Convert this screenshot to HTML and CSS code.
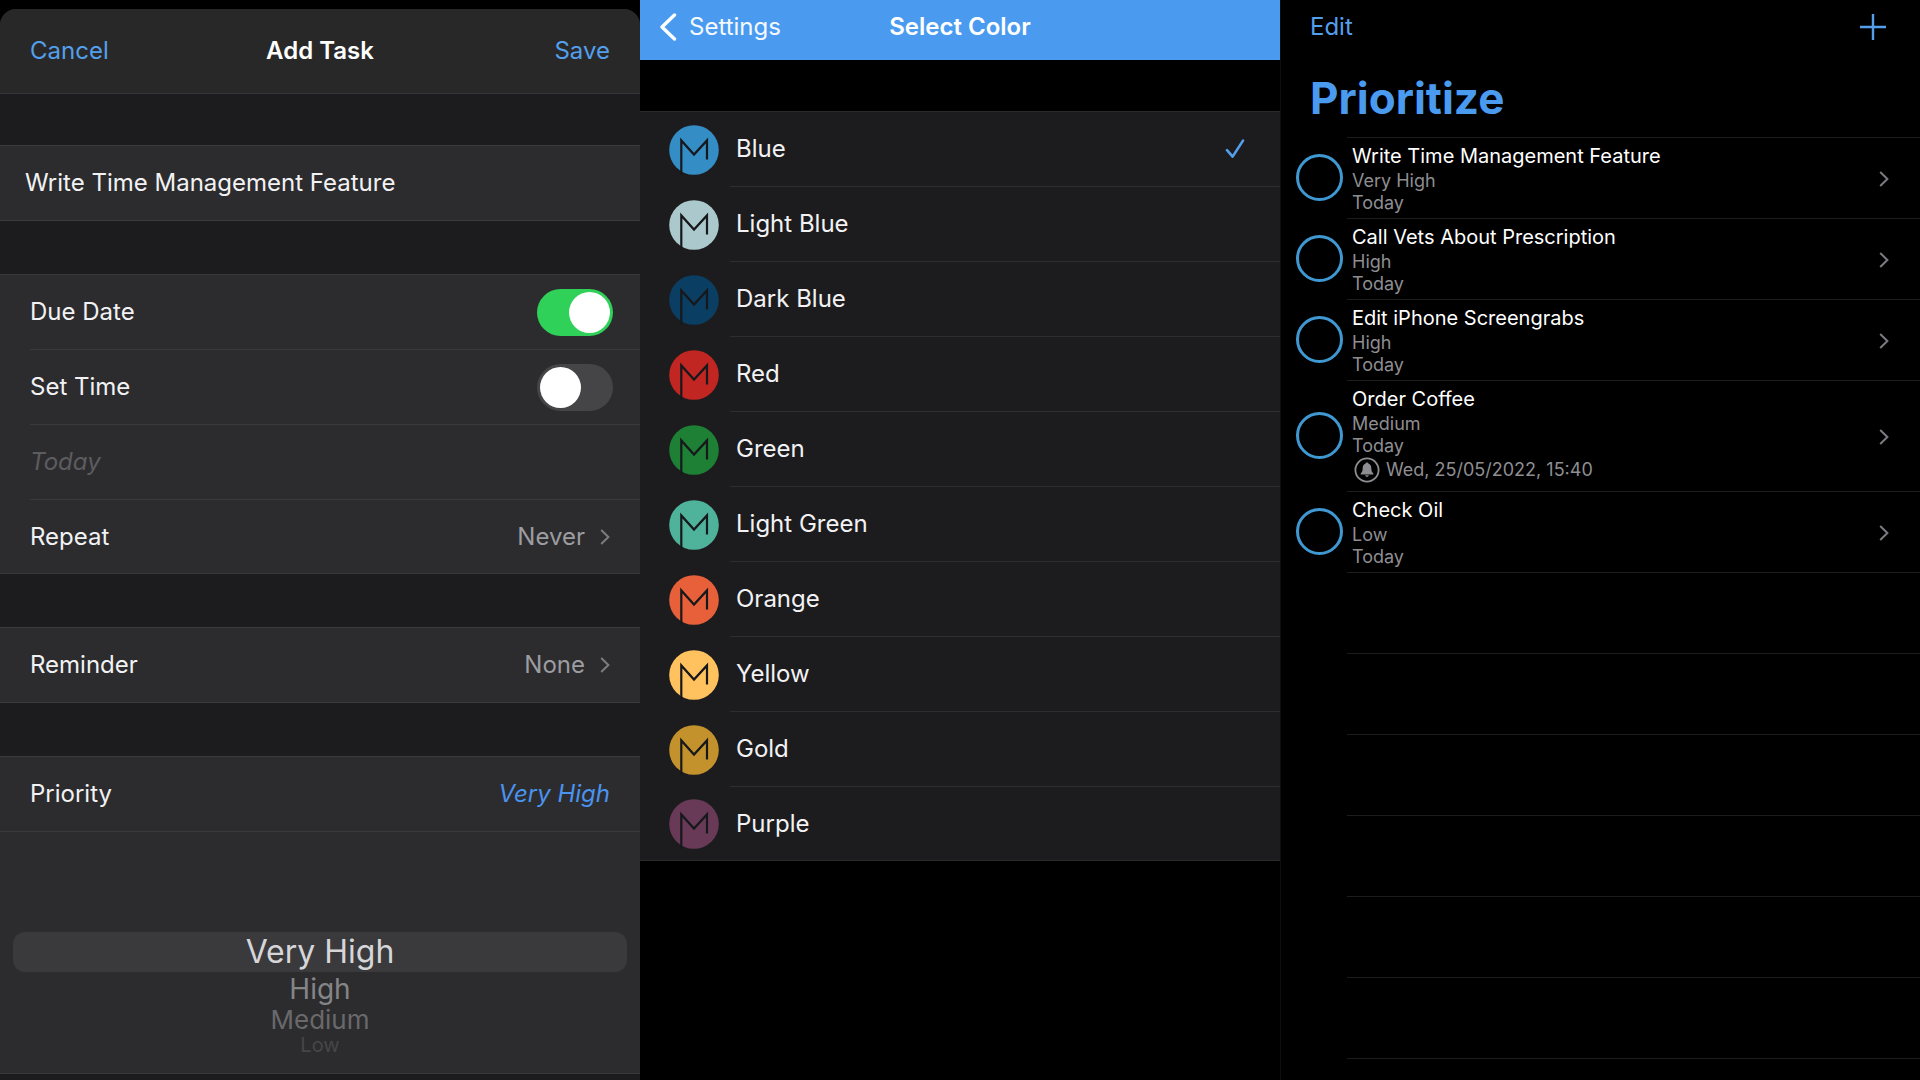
FILE: index.html
```
<!DOCTYPE html>
<html lang="en">
<head>
<meta charset="utf-8">
<meta name="viewport" content="width=device-width, initial-scale=1">
<title>Prioritize</title>
<link rel="stylesheet" href="styles.css">
</head>
<body>
<svg class="defs" width="0" height="0" aria-hidden="true">
  <symbol id="m-logo" viewBox="0 0 50 50"><circle cx="25" cy="25" r="24.8" fill="currentColor"/><path d="M12.3 50V15.4L25 29.6 38 15.4V34.6" fill="none" stroke="#16181b" stroke-width="2.2"/></symbol>
  <symbol id="chevron" viewBox="0 0 10 16"><path d="M1.2 1 8.4 8 1.2 15" fill="none" stroke="currentColor" stroke-width="2"/></symbol>
  <symbol id="check" viewBox="0 0 20 20"><path d="M2 11.2 7.6 17.6 18 1.6" fill="none" stroke="currentColor" stroke-width="2.6" stroke-linecap="round" stroke-linejoin="round"/></symbol>
</svg>
<main class="screens">

  <section class="screen add-task">
    <form class="sheet">
      <header class="sheet-bar">
        <button type="button" class="bar-button">Cancel</button>
        <h2 class="bar-title">Add Task</h2>
        <button type="button" class="bar-button bar-end">Save</button>
      </header>
      <div class="group group-first">
        <div class="row row-name"><input class="field" type="text" aria-label="Task name" value="Write Time Management Feature"></div>
      </div>
      <div class="group">
        <div class="row"><label for="due">Due Date</label><input class="switch" id="due" type="checkbox" checked></div>
        <div class="row"><label for="time">Set Time</label><input class="switch" id="time" type="checkbox"></div>
        <div class="row"><input class="field field-date" type="text" aria-label="Date" placeholder="Today"></div>
        <div class="row"><span>Repeat</span><button type="button" class="value">Never<svg class="chevron"><use href="#chevron"/></svg></button></div>
      </div>
      <div class="group">
        <div class="row"><span>Reminder</span><button type="button" class="value">None<svg class="chevron"><use href="#chevron"/></svg></button></div>
      </div>
      <div class="group group-priority">
        <div class="row row-full"><span>Priority</span><output class="priority">Very High</output></div>
        <div class="picker" role="radiogroup" aria-label="Priority">
          <label class="option option-selected"><input type="radio" name="priority" checked>Very High</label>
          <label class="option option-1"><input type="radio" name="priority">High</label>
          <label class="option option-2"><input type="radio" name="priority">Medium</label>
          <label class="option option-3"><input type="radio" name="priority">Low</label>
        </div>
      </div>
    </form>
  </section>

  <section class="screen select-color">
    <header class="color-bar">
      <a class="back" href="#settings"><svg class="back-icon" viewBox="0 0 18 28"><path d="M15.5 2 3 14 15.5 26" fill="none" stroke="currentColor" stroke-width="3.4" stroke-linecap="round" stroke-linejoin="round"/></svg>Settings</a>
      <h2 class="bar-title">Select Color</h2>
    </header>
    <div class="colors" role="radiogroup" aria-label="Color">
      <label class="color"><input type="radio" name="color" checked><svg class="logo blue"><use href="#m-logo"/></svg><span class="color-name">Blue<svg class="check"><use href="#check"/></svg></span></label>
      <label class="color"><input type="radio" name="color"><svg class="logo light-blue"><use href="#m-logo"/></svg><span class="color-name">Light Blue</span></label>
      <label class="color"><input type="radio" name="color"><svg class="logo dark-blue"><use href="#m-logo"/></svg><span class="color-name">Dark Blue</span></label>
      <label class="color"><input type="radio" name="color"><svg class="logo red"><use href="#m-logo"/></svg><span class="color-name">Red</span></label>
      <label class="color"><input type="radio" name="color"><svg class="logo green"><use href="#m-logo"/></svg><span class="color-name">Green</span></label>
      <label class="color"><input type="radio" name="color"><svg class="logo light-green"><use href="#m-logo"/></svg><span class="color-name">Light Green</span></label>
      <label class="color"><input type="radio" name="color"><svg class="logo orange"><use href="#m-logo"/></svg><span class="color-name">Orange</span></label>
      <label class="color"><input type="radio" name="color"><svg class="logo yellow"><use href="#m-logo"/></svg><span class="color-name">Yellow</span></label>
      <label class="color"><input type="radio" name="color"><svg class="logo gold"><use href="#m-logo"/></svg><span class="color-name">Gold</span></label>
      <label class="color"><input type="radio" name="color"><svg class="logo purple"><use href="#m-logo"/></svg><span class="color-name">Purple</span></label>
    </div>
  </section>

  <section class="screen tasks">
    <header class="tasks-bar">
      <button type="button" class="bar-button">Edit</button>
      <button type="button" class="bar-button add" aria-label="Add task"><svg class="plus" viewBox="0 0 26 26"><path d="M13 0V26M0 13H26" stroke="currentColor" stroke-width="2.4"/></svg></button>
    </header>
    <h1 class="tasks-title">Prioritize</h1>
    <ul class="task-list">
      <li class="task"><input class="done" type="checkbox" aria-label="Write Time Management Feature done"><a class="task-body" href="#task-1"><span class="task-text"><span class="task-name">Write Time Management Feature</span><span class="meta">Very High</span><span class="meta">Today</span></span><svg class="chevron"><use href="#chevron"/></svg></a></li>
      <li class="task"><input class="done" type="checkbox" aria-label="Call Vets About Prescription done"><a class="task-body" href="#task-2"><span class="task-text"><span class="task-name">Call Vets About Prescription</span><span class="meta">High</span><span class="meta">Today</span></span><svg class="chevron"><use href="#chevron"/></svg></a></li>
      <li class="task"><input class="done" type="checkbox" aria-label="Edit iPhone Screengrabs done"><a class="task-body" href="#task-3"><span class="task-text"><span class="task-name">Edit iPhone Screengrabs</span><span class="meta">High</span><span class="meta">Today</span></span><svg class="chevron"><use href="#chevron"/></svg></a></li>
      <li class="task"><input class="done" type="checkbox" aria-label="Order Coffee done"><a class="task-body" href="#task-4"><span class="task-text"><span class="task-name">Order Coffee</span><span class="meta">Medium</span><span class="meta">Today</span><span class="meta alarm"><svg class="bell" viewBox="0 0 26 26"><circle cx="13" cy="13" r="11.6" fill="none" stroke="currentColor" stroke-width="1.8"/><path d="M13 5.4c.9 0 1.3.5 1.4 1.1 2 .7 2.9 2.4 2.9 4.5 0 3.2.8 4.3 2 5.5v.9H6.7v-.9c1.2-1.2 2-2.3 2-5.5 0-2.1.9-3.8 2.9-4.5.1-.6.5-1.1 1.4-1.1zM11.2 18.3h3.6c-.2 1-.9 1.5-1.8 1.5s-1.6-.5-1.8-1.5z" fill="currentColor"/></svg>Wed, 25/05/2022, 15:40</span></span><svg class="chevron"><use href="#chevron"/></svg></a></li>
      <li class="task"><input class="done" type="checkbox" aria-label="Check Oil done"><a class="task-body" href="#task-5"><span class="task-text"><span class="task-name">Check Oil</span><span class="meta">Low</span><span class="meta">Today</span></span><svg class="chevron"><use href="#chevron"/></svg></a></li>
      <li class="blank"></li><li class="blank"></li><li class="blank"></li><li class="blank"></li><li class="blank"></li><li class="blank"></li><li class="blank"></li>
    </ul>
  </section>

</main>
</body>
</html>
```
FILE: styles.css
```
* { box-sizing: border-box; }

body {
  margin: 0;
  background: #000;
  color: #f2f2f4;
  font: 24px/32px Inter, "Liberation Sans", sans-serif;
}

button, input {
  margin: 0;
  padding: 0;
  border: 0;
  background: none;
  color: inherit;
  font: inherit;
}

h1, h2, ul { margin: 0; padding: 0; }
a { color: inherit; text-decoration: none; }
svg { display: block; flex: none; }
.defs { position: absolute; }

.screens {
  display: grid;
  grid-template-columns: repeat(3, minmax(0, 1fr));
  min-height: 100vh;
}

.bar-button { color: #549fec; }
.bar-title { font-size: 24px; font-weight: 600; color: #fff; text-align: center; }
.bar-end { justify-self: end; }
.chevron { width: 10px; height: 16px; color: #7c7c80; }

/* Add task */
.add-task { display: flex; padding-top: 9px; }

.sheet {
  flex: 1;
  min-width: 0;
  background: #1c1c1e;
  border-radius: 16px 16px 0 0;
  overflow: hidden;
}

.sheet-bar {
  display: grid;
  grid-template-columns: 1fr auto 1fr;
  align-items: center;
  justify-items: start;
  height: 85px;
  padding: 0 30px;
  background: #282828;
  border-bottom: 1px solid #363638;
}

.group {
  margin-top: 53px;
  background: #2c2c2e;
  border-top: 1px solid #3a3a3c;
  border-bottom: 1px solid #3a3a3c;
}

.group-first { margin-top: 51px; }

.row {
  display: flex;
  align-items: center;
  justify-content: space-between;
  height: 75px;
  margin-left: 30px;
  padding-right: 30px;
}

.row + .row { border-top: 1px solid #3a3a3c; }
.row:first-child { height: 74px; }
.row:last-child:not(:only-child) { height: 74px; }
.row-name { margin-left: 25px; }
.row-full { margin-left: 0; padding-left: 30px; }

.field { flex: 1; min-width: 0; }
.field-date { font-style: italic; }
.field-date::placeholder { color: #5c5c5f; opacity: 1; }

.switch {
  appearance: none;
  width: 76px;
  height: 47px;
  margin-right: -3px;
  padding: 3px;
  border-radius: 24px;
  background: #454548;
}

.switch::before {
  content: "";
  display: block;
  width: 41px;
  height: 41px;
  border-radius: 50%;
  background: #fff;
}

.switch:checked { background: #30d158; }
.switch:checked::before { margin-left: auto; }

.value { display: flex; align-items: center; gap: 15px; color: #9c9ca1; }
.priority { color: #4a93ee; font-style: italic; }

.picker {
  display: flex;
  flex-direction: column;
  height: 242px;
  padding: 100px 13px 0;
  border-top: 1px solid #3a3a3c;
  text-align: center;
}

.option input, .color input { appearance: none; width: 0; height: 0; }
.option-selected { height: 40px; border-radius: 12px; background: #3a3a3d; color: #d6d6d8; font-size: 32px; line-height: 40px; }
.option-1 { color: #858587; font-size: 28px; line-height: 34px; }
.option-2 { color: #69696b; font-size: 26px; line-height: 28px; }
.option-3 { color: #464648; font-size: 20px; line-height: 22px; }

/* Select color */
.color-bar {
  display: grid;
  grid-template-columns: 1fr auto 1fr;
  align-items: center;
  height: 60px;
  padding: 0 19px 6px;
  background: #4a9bf0;
  color: #f4f9ff;
}

.back { display: flex; align-items: center; gap: 12px; }
.back-icon { width: 18px; height: 28px; color: #fff; }

.colors {
  margin-top: 51px;
  background: #1c1c1e;
  border-top: 1px solid #2a2a2c;
  border-bottom: 1px solid #2a2a2c;
}

.color { display: flex; align-items: center; padding-left: 29px; }
.logo { width: 50px; height: 50px; margin-right: 11px; }

.color-name {
  flex: 1;
  display: flex;
  align-items: center;
  justify-content: space-between;
  height: 75px;
  padding: 0 35px 0 6px;
  border-bottom: 1px solid #2e2e30;
}

.color:last-child .color-name { height: 73px; border-bottom: 0; }
.check { width: 20px; height: 20px; color: #549fec; }

.blue { color: #348dc4; }
.light-blue { color: #abc9cc; }
.dark-blue { color: #0b3e63; }
.red { color: #c22622; }
.green { color: #1d8035; }
.light-green { color: #4fb39c; }
.orange { color: #e8603a; }
.yellow { color: #ffc25e; }
.gold { color: #c3922c; }
.purple { color: #683a58; }

/* Task list */
.tasks { border-left: 1px solid #0e0e10; }

.tasks-bar {
  display: flex;
  align-items: center;
  justify-content: space-between;
  height: 54px;
  padding: 0 34px 0 29px;
}

.plus { width: 26px; height: 26px; }

.tasks-title {
  padding: 16px 29px 11px;
  color: #4a9bf0;
  font-size: 44px;
  line-height: 56px;
  font-weight: 700;
}

.task-list { list-style: none; }
.task { display: flex; align-items: center; padding-left: 15px; }

.done {
  appearance: none;
  flex: none;
  width: 47px;
  height: 47px;
  border: 3px solid #3f98d2;
  border-radius: 50%;
}

.task-body {
  flex: 1;
  display: flex;
  align-items: center;
  justify-content: space-between;
  min-width: 0;
  min-height: 81px;
  margin-left: 4px;
  padding: 5px 31px 4px 5px;
  border-top: 1px solid #1c1c1e;
}

.task-text { display: flex; flex-direction: column; }
.task-name { color: #fff; font-size: 20px; line-height: 27px; }
.meta { color: #8e8e92; font-size: 18px; line-height: 22px; }
.alarm { display: flex; align-items: center; gap: 6px; height: 30px; padding: 0 0 4px 2px; }
.bell { width: 26px; height: 26px; }

.blank { height: 81px; margin-left: 66px; border-top: 1px solid #1c1c1e; }
.blank:last-child { height: 1px; }
```
